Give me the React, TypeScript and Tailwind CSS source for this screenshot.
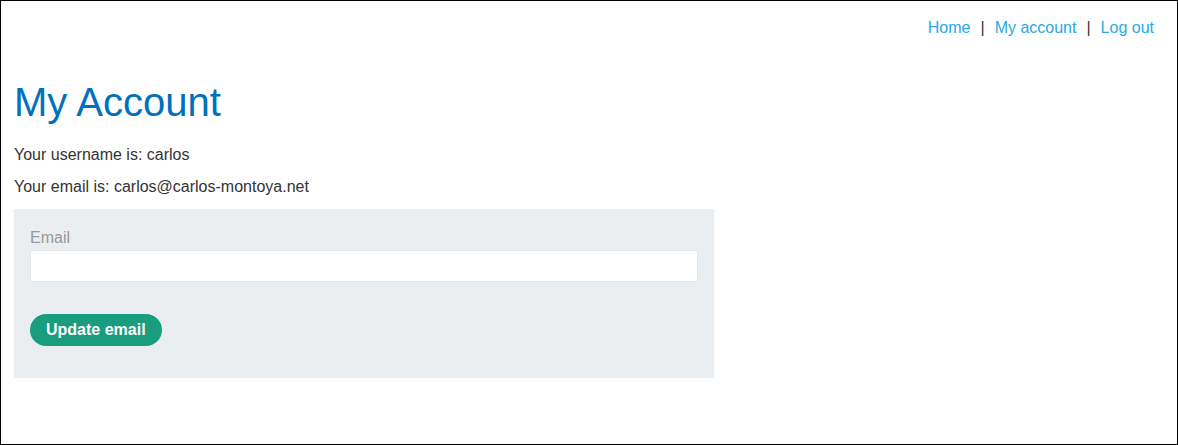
import React from "react";

export default function App() {
    return (
        <div className="w-[1178px] h-[445px] border border-black bg-white font-['Liberation_Sans',Arial,sans-serif] text-[#333332] text-base overflow-hidden">
            {/* Top navigation */}
            <div className="flex justify-end items-center gap-[10px] pt-[17px] pr-[23px] leading-5">
                <a href="#" className="text-[#29a9e1]">Home</a>
                <span className="text-[#333332]">|</span>
                <a href="#" className="text-[#29a9e1]">My account</a>
                <span className="text-[#333332]">|</span>
                <a href="#" className="text-[#29a9e1]">Log out</a>
            </div>

            <div className="pl-[13px] pt-[40px]">
                <h1 className="text-[40px] leading-[48px] text-[#0071bc]">My Account</h1>
                <p className="mt-[19px] leading-5">Your username is: carlos</p>
                <p className="mt-[12px] leading-5">Your email is: carlos@carlos-montoya.net</p>

                <form className="mt-[12px] w-[700px] h-[169px] bg-[#eaeef0] px-4 pt-[19px]">
                    <label className="block text-[#999] leading-5 mb-[2px]">Email</label>
                    <input
                        type="text"
                        className="block w-[668px] h-[32px] bg-white border border-[#e4e6e8] rounded-[3px] outline-none"
                    />
                    <button
                        type="button"
                        className="mt-[32px] h-[32px] px-4 rounded-full bg-[#1a9c7f] text-white font-bold leading-5"
                    >
                        Update email
                    </button>
                </form>
            </div>
        </div>
    );
}
